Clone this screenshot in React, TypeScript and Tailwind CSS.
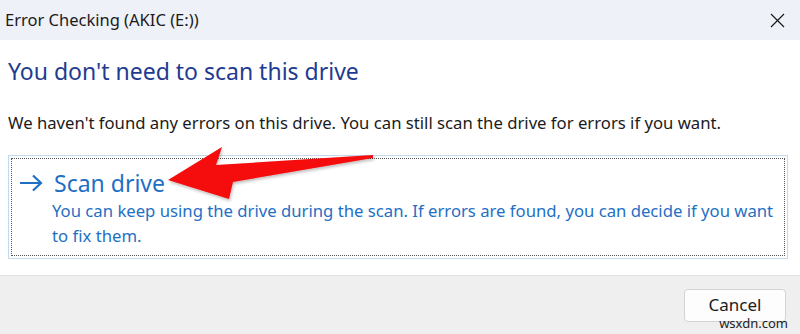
import React from "react";

function CloseIcon() {
  return (
    <svg width="15" height="15" viewBox="0 0 15 15" fill="none">
      <path d="M1 1L14 14M14 1L1 14" stroke="#1b1b1b" strokeWidth="1.2" />
    </svg>
  );
}

function LinkArrow() {
  return (
    <svg width="24" height="18" viewBox="0 0 24 18" fill="none">
      <path d="M1 9H22M14 1.5L22 9L14 16.5" stroke="#1f6fc5" strokeWidth="2.2" />
    </svg>
  );
}

function RedArrow() {
  return (
    <svg
      className="absolute left-0 top-0 pointer-events-none"
      width="800"
      height="334"
      viewBox="0 0 800 334"
    >
      <defs>
        <filter id="sh" x="-10%" y="-20%" width="120%" height="140%">
          <feDropShadow dx="1" dy="2" stdDeviation="1.5" floodColor="#000" floodOpacity="0.25" />
        </filter>
      </defs>
      <polygon
        points="168,180 222,147 216,165 373,155 373,158 233,182 229,199"
        fill="#f50a0a"
        filter="url(#sh)"
      />
    </svg>
  );
}

export default function App() {
  return (
    <div
      className="relative w-[800px] h-[334px] overflow-hidden bg-white flex flex-col"
      style={{ fontFamily: '"Noto Sans", "Open Sans", sans-serif' }}
    >
      {/* title bar */}
      <div className="h-[40px] bg-[#eef1f7] flex items-center justify-between pl-[5px] pr-[15px]">
        <span className="text-[16.5px] text-[#1b1b1b]">Error Checking (AKIC (E:))</span>
        <CloseIcon />
      </div>

      {/* body */}
      <div className="flex-1 flex flex-col px-[8px] pt-[16px]">
        <h1 className="text-[23px] leading-[30px] text-[#1f3b91]">You don't need to scan this drive</h1>
        <p className="mt-[26px] text-[16.7px] leading-[22px] text-[#1b1b1b]">
          We haven't found any errors on this drive. You can still scan the drive for errors if you want.
        </p>
        <div className="mt-[21px] w-[780px] h-[104px] border border-[#c3d9ee] p-[2px]">
          <div className="h-full border border-dotted border-[#555] pl-[7px] pt-[9px] text-[#1f6fc5]">
            <div className="flex items-center gap-[11px]">
              <LinkArrow />
              <span className="text-[23px] leading-[30px]">Scan drive</span>
            </div>
            <p className="pl-[33px] text-[16.7px] leading-[25px]">
              You can keep using the drive during the scan. If errors are found, you can decide if you want
              <br />
              to fix them.
            </p>
          </div>
        </div>
      </div>

      {/* footer */}
      <div className="h-[59px] bg-[#efefef] border-t border-[#e2e2e2] flex items-center justify-end pr-[14px]">
        <button className="w-[102px] h-[33px] bg-[#fdfdfd] border border-[#d3d3d3] rounded-[4px] text-[17px] text-[#1b1b1b]">
          Cancel
        </button>
      </div>

      <RedArrow />
      <span className="absolute right-[12px] bottom-[4px] text-[13px] leading-[14px] text-[#222]">wsxdn.com</span>
    </div>
  );
}
